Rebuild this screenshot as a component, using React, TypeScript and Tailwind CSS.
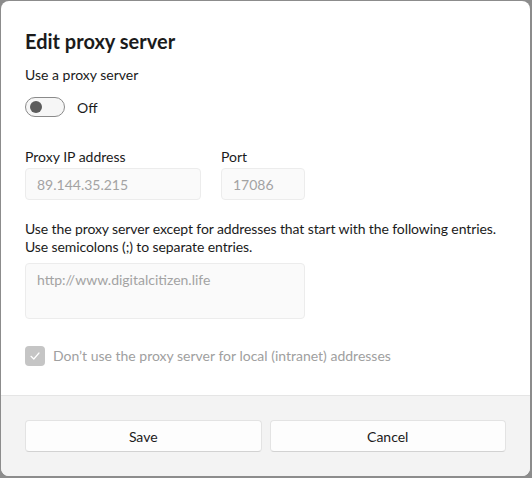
import React from "react";

export default function App() {
  return (
    <div
      className="w-[532px] h-[478px] bg-[#8c8c8c] pl-px pt-px pr-[2px] pb-[2px]"
      style={{ fontFamily: 'Lato, "Noto Sans", sans-serif' }}
    >
      <div className="w-full h-full bg-white rounded-[8px] overflow-hidden flex flex-col">
        <div className="flex-1 pl-[24px] pt-[26px] text-[#1b1b1b]">
          <h1 className="text-[20px] leading-[28px] font-bold">Edit proxy server</h1>
          <div className="mt-[10px] text-[14px] leading-[20px]">Use a proxy server</div>
          <div className="mt-[12px] flex items-center h-[20px]">
            <div className="w-[40px] h-[20px] rounded-full border border-[#8a8a8a] bg-[#f6f6f6] flex items-center pl-[4px]">
              <div className="w-[12px] h-[12px] rounded-full bg-[#5c5c5c]" />
            </div>
            <span className="ml-[12px] text-[14px]">Off</span>
          </div>
          <div className="mt-[30px] flex gap-[20px]">
            <div className="flex flex-col">
              <span className="text-[14px] leading-[20px]">Proxy IP address</span>
              <div className="mt-[1px] w-[176px] h-[32px] rounded-[4px] border border-[#ececec] bg-[#fafafa] flex items-center px-[11px] text-[14px] text-[#a3a3a3]">
                89.144.35.215
              </div>
            </div>
            <div className="flex flex-col">
              <span className="text-[14px] leading-[20px]">Port</span>
              <div className="mt-[1px] w-[84px] h-[32px] rounded-[4px] border border-[#ececec] bg-[#fafafa] flex items-center px-[11px] text-[14px] text-[#a3a3a3]">
                17086
              </div>
            </div>
          </div>
          <p className="mt-[20px] text-[14px] leading-[18px] whitespace-nowrap tracking-[-0.1px]">
            Use the proxy server except for addresses that start with the following entries.
            <br />
            Use semicolons (;) to separate entries.
          </p>
          <div className="mt-[7px] w-[280px] h-[56px] rounded-[4px] border border-[#ececec] bg-[#fafafa] px-[11px] pt-[5px] text-[14px] text-[#a3a3a3]">
            http://www.digitalcitizen.life
          </div>
          <div className="mt-[26px] flex items-center">
            <div className="w-[20px] h-[20px] rounded-[4px] bg-[#c5c5c5] flex items-center justify-center">
              <svg width="12" height="12" viewBox="0 0 12 12" fill="none">
                <path d="M2 6.3 L4.8 9 L10 3" stroke="white" strokeWidth="1.2" strokeLinecap="round" strokeLinejoin="round" />
              </svg>
            </div>
            <span className="ml-[8px] text-[14px] text-[#a0a0a0] whitespace-nowrap">
              Don’t use the proxy server for local (intranet) addresses
            </span>
          </div>
        </div>
        <div className="h-[81px] bg-[#f3f3f3] border-t border-[#e5e5e5] flex gap-[8px] pl-[24px] pr-[24px] pt-[24px]">
          <button className="flex-1 h-[32px] rounded-[4px] border border-[#e3e3e3] border-b-[#d2d2d2] bg-[#fdfdfd] text-[14px] text-[#1b1b1b]">
            Save
          </button>
          <button className="flex-1 h-[32px] rounded-[4px] border border-[#e3e3e3] border-b-[#d2d2d2] bg-[#fdfdfd] text-[14px] text-[#1b1b1b]">
            Cancel
          </button>
        </div>
      </div>
    </div>
  );
}
